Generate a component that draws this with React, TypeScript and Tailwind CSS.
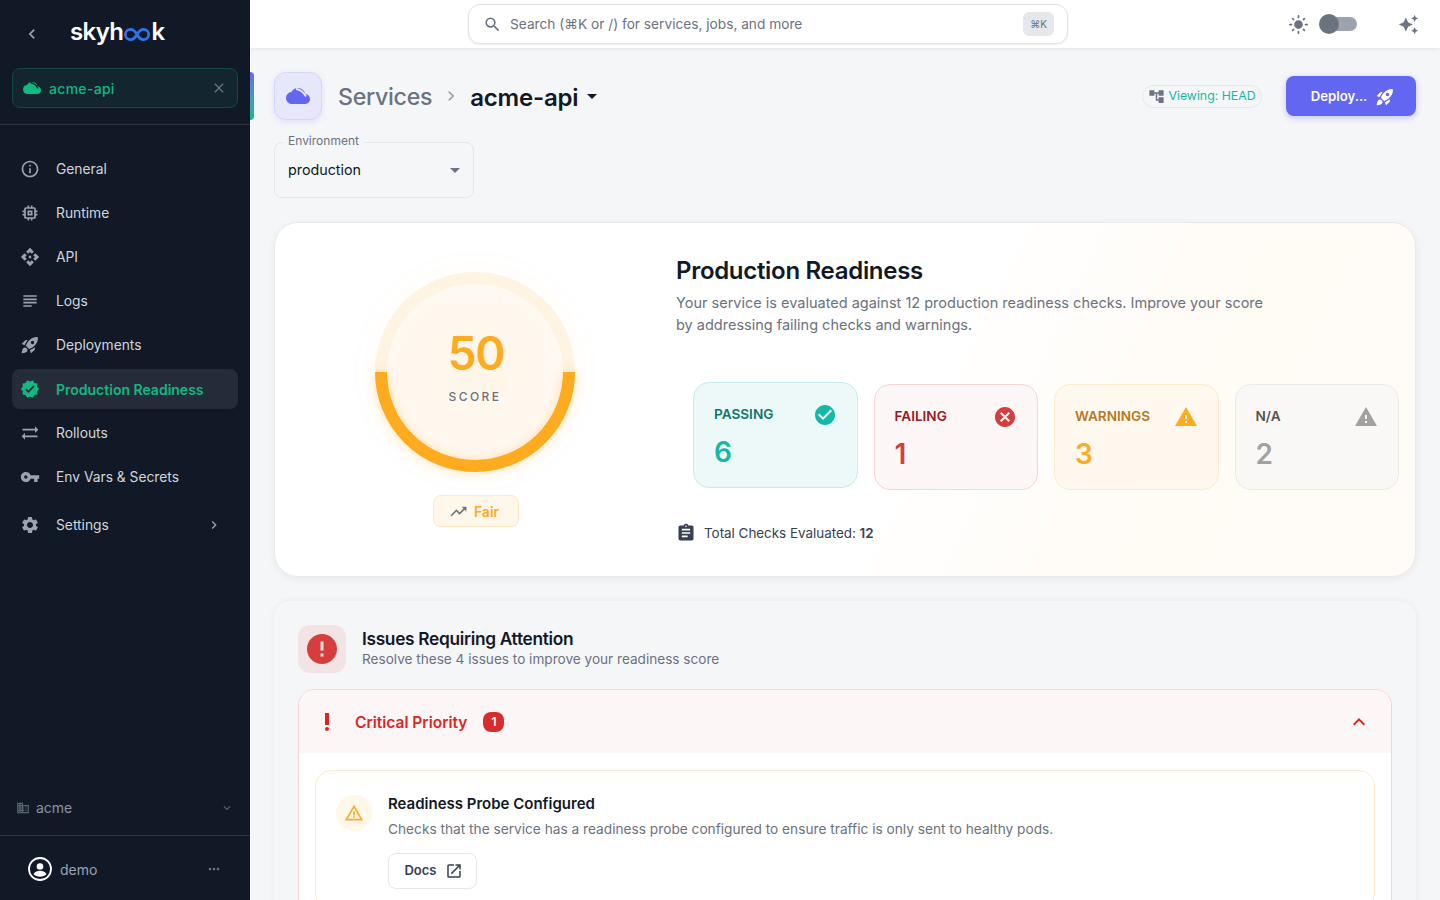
import React from "react";
import {
  MdAccountTree,
  MdApi,
  MdArrowDropDown,
  MdAssignment,
  MdAutoAwesome,
  MdCancel,
  MdCheckCircle,
  MdChevronLeft,
  MdChevronRight,
  MdClose,
  MdError,
  MdExpandLess,
  MdExpandMore,
  MdInfoOutline,
  MdLightMode,
  MdMemory,
  MdMoreHoriz,
  MdOpenInNew,
  MdOutlineBusiness,
  MdPriorityHigh,
  MdRocketLaunch,
  MdSearch,
  MdSettings,
  MdSubject,
  MdSyncAlt,
  MdTrendingUp,
  MdVerified,
  MdVpnKey,
  MdWarning,
  MdWarningAmber,
} from "react-icons/md";

const CloudIcon = ({ className, stripe }: { className: string; stripe: string }) => (
  <svg viewBox="0 0 24 24" className={className} fill="currentColor">
    <path d="M19.35 10.04A7.49 7.49 0 0 0 12 4C9.11 4 6.6 5.64 5.35 8.04A5.994 5.994 0 0 0 0 14c0 3.31 2.69 6 6 6h13c2.76 0 5-2.24 5-5 0-2.64-2.05-4.78-4.65-4.96z" />
    <path d="M10 5c4 0.500 7.500 3 10 7.500" fill="none" stroke={stripe} strokeWidth="1.800" />
  </svg>
);

const UserIcon = () => (
  <svg viewBox="0 0 24 24" className="h-6 w-6 text-white" fill="currentColor">
    <circle cx="12" cy="12" r="11" fill="none" stroke="currentColor" strokeWidth="1.8" />
    <circle cx="12" cy="9.500" r="3.300" />
    <path d="M5.500 17c1.500-2.300 4-3.300 6.500-3.300s5 1 6.500 3.300c-1.500 1.700-3.800 2.800-6.500 2.800s-5-1.100-6.500-2.800z" />
  </svg>
);

const navItems = [
  { label: "General", icon: MdInfoOutline },
  { label: "Runtime", icon: MdMemory },
  { label: "API", icon: MdApi },
  { label: "Logs", icon: MdSubject },
  { label: "Deployments", icon: MdRocketLaunch },
  { label: "Production Readiness", icon: MdVerified, active: true },
  { label: "Rollouts", icon: MdSyncAlt },
  { label: "Env Vars & Secrets", icon: MdVpnKey },
];

const Sidebar = () => (
  <aside className="flex h-full w-[250px] shrink-0 flex-col bg-[#111927]">
    <div className="flex h-[68px] items-center pl-[22px]">
      <MdChevronLeft className="h-5 w-5 text-[#9ca3af]" />
      <div className="ml-[28px] flex items-center pb-1 text-[24px] font-semibold leading-none tracking-[-0.6px] text-white">
        <span>skyh</span>
        <svg viewBox="0 0 30 16" className="mt-[4px] h-[15px] w-[28px]" fill="none" stroke="#2f74ee" strokeWidth="3">
          <path d="M15 8c-2-3.500-4-5.500-7-5.500a5.500 5.500 0 0 0 0 11c3 0 5-2 7-5.500s4-5.500 7-5.500a5.500 5.500 0 0 1 0 11c-3 0-5-2-7-5.500z" />
        </svg>
        <span>k</span>
      </div>
    </div>
    <div className="mx-3 flex h-10 items-center rounded-lg border border-[#0f4a45] bg-[#13252f] pl-2.5 pr-[10px]">
      <CloudIcon className="h-[18px] w-[18px] text-[#10b981]" stripe="#13252f" />
      <span className="ml-2 text-[14px] font-medium tracking-[0.3px] text-[#10b981]">acme-api</span>
      <MdClose className="ml-auto h-4 w-4 text-[#6b7280]" />
    </div>
    <div className="mt-4 h-px bg-[#2a3140]" />
    <nav className="mt-6 flex flex-col gap-1 px-3">
      {navItems.map((item) => (
        <div
          key={item.label}
          className={`flex h-10 items-center rounded-lg pl-2 ${
            item.active ? "bg-[#252c39] text-[14px] font-semibold text-[#10b981]" : "text-[13.8px] text-[#d1d5db]"
          }`}
        >
          <item.icon className={`h-5 w-5 ${item.active ? "text-[#10b981]" : "text-[#9ca3af]"}`} />
          <span className="ml-4">{item.label}</span>
        </div>
      ))}
      <div className="mt-1 flex h-10 items-center pl-2 pr-4 text-[13.8px] text-[#d1d5db]">
        <MdSettings className="h-5 w-5 text-[#9ca3af]" />
        <span className="ml-4">Settings</span>
        <MdChevronRight className="ml-auto h-4 w-4 text-[#9ca3af]" />
      </div>
    </nav>
    <div className="mt-auto flex h-[55px] items-center pl-4 pr-4 text-[14px] text-[#8b93a1]">
      <MdOutlineBusiness className="h-[14px] w-[14px] text-[#5d6573]" />
      <span className="ml-1.5">acme</span>
      <MdExpandMore className="ml-auto h-3.5 w-3.5 text-[#5d6573]" />
    </div>
    <div className="h-px bg-[#2a3444]" />
    <div className="flex h-[64px] items-center pl-[28px] pr-[28px] pt-0.5 text-[14px] text-[#9ca3af]">
      <UserIcon />
      <span className="ml-[8px]">demo</span>
      <MdMoreHoriz className="ml-auto h-4 w-4 text-[#6b7280]" />
    </div>
  </aside>
);

const TopBar = () => (
  <header className="z-10 flex h-12 shrink-0 items-center bg-white pl-[218px] pr-[21px] shadow-[0_1px_4px_rgba(0,0,0,0.08)]">
    <div className="flex h-10 w-[600px] items-center rounded-xl border border-[#e0e2e7] bg-white pl-3.5 pr-[13px] shadow-[0_1px_2px_rgba(0,0,0,0.08)]">
      <MdSearch className="h-[19px] w-[19px] text-[#6b7280]" />
      <span className="ml-2 text-[13.7px] text-[#6b7280]">Search (⌘K or /) for services, jobs, and more</span>
      <span className="ml-auto flex h-6 w-[31px] items-center justify-center rounded-md bg-[#e5e7eb] text-[10px] text-[#6b7280]">⌘K</span>
    </div>
    <div className="ml-auto flex items-center">
      <MdLightMode className="h-[21px] w-[21px] text-[#6b7280]" />
      <div className="relative ml-[10px] h-5 w-[38px]">
        <div className="absolute left-[6px] right-0 top-[3px] h-[14px] rounded-full bg-[#9ca3af]" />
        <div className="absolute left-0 top-0 h-5 w-5 rounded-full bg-[#6b7280]" />
      </div>
      <MdAutoAwesome className="ml-[41px] h-[21px] w-[21px] text-[#6b7280]" />
    </div>
  </header>
);

const statCards = [
  { label: "PASSING", value: "6", icon: MdCheckCircle, box: "border-[#c5ecea] bg-[#ecf9f8] -translate-y-0.5", text: "text-[#0f766e]", num: "text-[#14b8a6]" },
  { label: "FAILING", value: "1", icon: MdCancel, box: "border-[#f6d5d5] bg-[#fdf6f6]", text: "text-[#991b1b]", num: "text-[#d63d3d]" },
  { label: "WARNINGS", value: "3", icon: MdWarning, box: "border-[#fdebcc] bg-[#fff8ef]", text: "text-[#b7791f]", num: "text-[#ffab1f]" },
  { label: "N/A", value: "2", icon: MdWarning, box: "border-[#eaeaea] bg-[#faf8f6]", text: "text-[#57534e]", num: "text-[#a3a19d]" },
];

const iconColors: Record<string, string> = {
  PASSING: "text-[#14b8a6]",
  FAILING: "text-[#d63d3d]",
  WARNINGS: "text-[#ffab1f]",
  "N/A": "text-[#a3a19d]",
};

const ScoreRing = () => (
  <div className="relative mt-[17px] h-[200px] w-[200px]">
    <div className="absolute inset-[12px] rounded-full bg-[radial-gradient(circle,#fff5e8_0%,#fff9f2_70%,#fffaf5_100%)] shadow-[0_0_50px_rgba(255,171,31,0.06)]" />
    <svg viewBox="0 0 200 200" className="absolute inset-0 h-full w-full overflow-visible">
      <circle cx="100" cy="100" r="94" fill="none" stroke="#fff3e1" strokeWidth="12" />
      <path d="M6 100a94 94 0 0 0 188 0" fill="none" stroke="#ffab1f" strokeWidth="12" className="drop-shadow-[0_0_6px_rgba(255,171,31,0.35)]" />
    </svg>
    <div className="absolute inset-0 flex flex-col items-center justify-center">
      <span className="mt-[-14px] pl-0.5 text-[46px] font-semibold leading-[56px] tracking-[-1.5px] text-[#ffab1f]">50</span>
      <span className="mt-[7px] text-[12px] font-medium tracking-[2.4px] text-[#6b7280]">SCORE</span>
    </div>
  </div>
);

const ReadinessCard = () => (
  <section className="mt-6 flex h-[355px] rounded-3xl border border-[#e8e9ec] bg-[linear-gradient(115deg,#ffffff_55%,#fffbf5_78%,#fffcf8_100%)] shadow-[0_2px_8px_rgba(0,0,0,0.06)]">
    <div className="mr-px flex w-[400px] shrink-0 flex-col items-center pt-[32px]">
      <ScoreRing />
      <div className="ml-0.5 mt-[23px] flex h-8 w-[86px] items-center justify-center rounded-lg border border-[#fde8c4] bg-[#fff7ea] pr-1">
        <MdTrendingUp className="h-[19px] w-[19px] text-[#6b7280]" />
        <span className="ml-[6px] text-[14px] font-semibold text-[#ffab1f]">Fair</span>
      </div>
    </div>
    <div className="flex-1 pr-4 pt-[32px]">
      <h1 className="text-[24px] font-semibold leading-8 tracking-[-0.3px] text-[#111827]">Production Readiness</h1>
      <p className="mt-[5px] max-w-[600px] text-[14.5px] leading-[22px] text-[#6b7280]">
        Your service is evaluated against 12 production readiness checks. Improve your score by addressing failing checks and warnings.
      </p>
      <div className="ml-[17px] mt-[48px] flex gap-4">
        {statCards.map((card) => (
          <div key={card.label} className={`h-[106px] w-[164.5px] rounded-2xl border px-5 pt-5 ${card.box}`}>
            <div className="flex h-6 items-center justify-between">
              <span className={`pb-0.5 text-[13.6px] font-semibold ${card.text}`}>{card.label}</span>
              <card.icon className={`h-6 w-6 ${iconColors[card.label]}`} />
            </div>
            <div className={`mt-[7px] text-[28px] font-semibold leading-9 ${card.num}`}>{card.value}</div>
          </div>
        ))}
      </div>
      <div className="mt-[33px] flex h-5 items-center text-[13.4px] text-[#374151]">
        <MdAssignment className="h-5 w-5 text-[#374151]" />
        <span className="ml-2">
          Total Checks Evaluated: <strong className="font-semibold">12</strong>
        </span>
      </div>
    </div>
  </section>
);

const IssuesPanel = () => (
  <section className="mt-6 rounded-t-2xl bg-[#f5f6f8] px-6 pb-24 pt-6 shadow-[0_0_6px_rgba(0,0,0,0.06)]">
    <div className="flex items-center">
      <div className="flex h-12 w-12 items-center justify-center rounded-xl bg-[#f2e3e4]">
        <MdError className="h-9 w-9 text-[#d63d3d]" />
      </div>
      <div className="ml-4 pb-0.5">
        <h2 className="text-[17.3px] font-semibold leading-[22px] tracking-[-0.3px] text-[#111827]">Issues Requiring Attention</h2>
        <p className="text-[13.6px] leading-[18px] text-[#6b7280]">Resolve these 4 issues to improve your readiness score</p>
      </div>
    </div>
    <div className="mt-4 rounded-t-2xl border border-[#f6d5d5] bg-white">
      <div className="flex h-[63px] items-center rounded-t-2xl bg-[#fdf6f6] pl-4 pr-5">
        <MdPriorityHigh className="h-6 w-6 text-[#dc2626]" />
        <span className="ml-4 pt-0.5 text-[15.5px] font-semibold text-[#dc2626]">Critical Priority</span>
        <span className="ml-4 flex h-5 w-[21px] items-center justify-center rounded-lg bg-[#d92d2d] text-[12px] font-semibold text-white">1</span>
        <MdExpandLess className="ml-auto h-6 w-6 text-[#dc2626]" />
      </div>
      <div className="px-4 pb-4 pt-[17px]">
        <div className="flex rounded-2xl border border-[#fdebcc] px-5 pb-5 pt-[21px]">
          <div className="mt-[3px] flex h-9 w-9 shrink-0 items-center justify-center rounded-full bg-[#fff7ea]">
            <MdWarningAmber className="h-5 w-5 text-[#ffab1f]" />
          </div>
          <div className="ml-4">
            <h3 className="text-[15px] font-semibold leading-6 text-[#111827]">Readiness Probe Configured</h3>
            <p className="mt-[3px] text-[13.7px] leading-5 text-[#6b7280]">
              Checks that the service has a readiness probe configured to ensure traffic is only sent to healthy pods.
            </p>
            <button className="mt-[14px] flex h-9 w-[89px] items-center justify-center rounded-lg border border-[#e5e7eb] bg-white pl-0.5 text-[13px] font-semibold text-[#374151]">
              Docs
              <MdOpenInNew className="ml-2 h-[18px] w-[18px]" />
            </button>
          </div>
        </div>
      </div>
    </div>
  </section>
);

const App = () => (
  <div className="flex h-screen w-full overflow-hidden bg-[#f5f6f8] font-['Inter','Liberation_Sans',sans-serif]">
    <Sidebar />
    <div className="flex min-w-0 flex-1 flex-col">
      <TopBar />
      <main className="relative flex-1 overflow-hidden px-6 pt-6">
        <div className="absolute left-0 top-6 h-12 w-1 rounded-r bg-gradient-to-b from-[#6366f1] to-[#10b981]" />
        <div className="flex h-12 items-center">
          <div className="flex h-12 w-12 items-center justify-center rounded-xl border border-[#d4d6fa] bg-[#e6e7fa] shadow-[0_2px_6px_rgba(99,102,241,0.15)]">
            <CloudIcon className="h-6 w-6 text-[#6366f1]" stripe="#e6e7fa" />
          </div>
          <span className="ml-4 pt-[3px] text-[23.2px] font-medium tracking-[-0.3px] text-[#6b7280]">Services</span>
          <MdChevronRight className="ml-[9px] h-5 w-5 text-[#9ca3af]" />
          <span className="ml-[9px] pt-[3px] text-[24px] font-semibold tracking-[-0.2px] text-[#111827]">acme-api</span>
          <MdArrowDropDown className="ml-[2px] h-6 w-6 text-[#111827]" />
          <div className="ml-auto flex h-[23px] w-[120px] items-center justify-center rounded-full border border-[#e5e7eb] text-[12.3px] text-[#14b8a6]">
            <MdAccountTree className="h-[17px] w-[17px] text-[#6b7280]" />
            <span className="ml-[3px]">Viewing: HEAD</span>
          </div>
          <button className="ml-6 flex h-10 w-[130px] items-center justify-center rounded-lg bg-[#6366f1] pl-1 pt-px text-[13.2px] font-semibold text-white shadow-[0_2px_6px_rgba(99,102,241,0.35)]">
            Deploy...
            <MdRocketLaunch className="ml-2 h-5 w-5" />
          </button>
        </div>
        <div className="relative mt-[22px] flex h-14 w-[200px] items-center justify-between rounded-lg border border-[#e5e7eb] pl-[13px] pr-[6px]">
          <span className="absolute -top-[10px] left-[8px] bg-[#f5f6f8] px-[5px] text-[12px] leading-4 text-[#6b7280]">Environment</span>
          <span className="pb-px text-[14.3px] text-[#111827]">production</span>
          <MdArrowDropDown className="h-6 w-6 text-[#6b7280]" />
        </div>
        <ReadinessCard />
        <IssuesPanel />
      </main>
    </div>
  </div>
);

export default App;
